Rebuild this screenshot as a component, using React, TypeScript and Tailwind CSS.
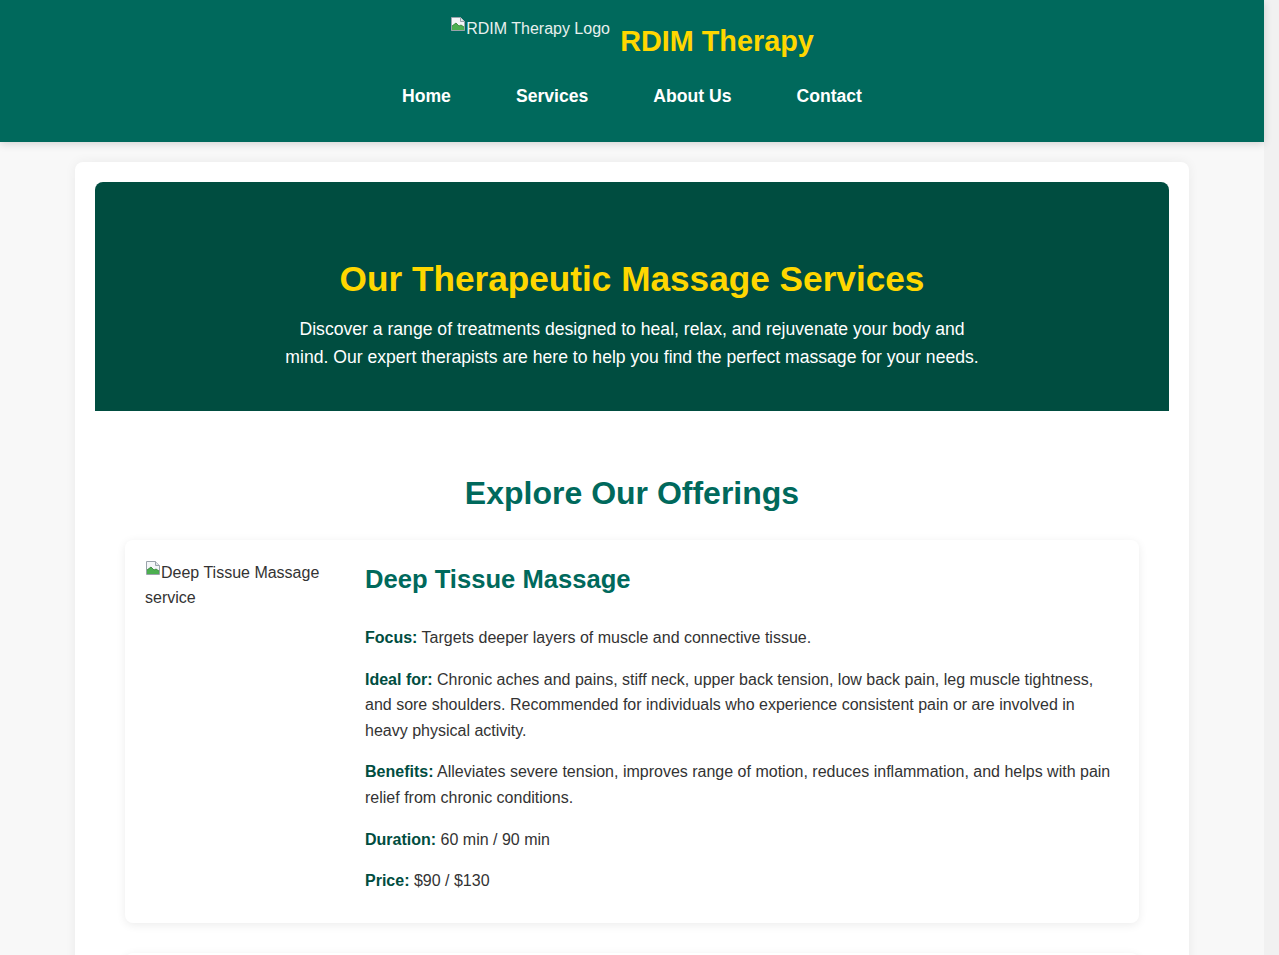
import React from 'react';

const services = [
  {
    title: 'Deep Tissue Massage',
    focus: 'Targets deeper layers of muscle and connective tissue.',
    ideal:
      'Chronic aches and pains, stiff neck, upper back tension, low back pain, leg muscle tightness, and sore shoulders. Recommended for individuals who experience consistent pain or are involved in heavy physical activity.',
    benefits:
      'Alleviates severe tension, improves range of motion, reduces inflammation, and helps with pain relief from chronic conditions.',
    duration: '60 min / 90 min',
    price: '$90 / $130',
  },
  {
    title: 'Swedish Massage',
    focus: 'Gentle, flowing strokes to promote overall relaxation.',
    ideal:
      'First-time clients, stress relief, light muscle tension, and anyone looking to unwind and restore a sense of calm.',
    benefits:
      'Improves circulation, eases muscle stiffness, lowers stress levels, and supports better sleep.',
    duration: '60 min / 90 min',
    price: '$80 / $115',
  },
  {
    title: 'Hot Stone Massage',
    focus: 'Smooth, heated stones placed on key points of the body.',
    ideal:
      'Deep relaxation, muscle tension, poor circulation, and those who enjoy the soothing effect of warmth.',
    benefits:
      'Warms and loosens tight muscles, allows deeper work with less pressure, and melts away stress.',
    duration: '75 min / 90 min',
    price: '$100 / $125',
  },
  {
    title: 'Sports Massage',
    focus: 'Muscle groups used in specific athletic activities.',
    ideal:
      'Athletes, active individuals, pre- and post-event preparation, and recovery from training or minor injuries.',
    benefits:
      'Enhances flexibility, speeds recovery, prevents injury, and improves overall athletic performance.',
    duration: '60 min / 90 min',
    price: '$95 / $135',
  },
];

// broken-image glyph, the way the browser draws a missing picture
function BrokenIcon() {
  return (
    <svg width="16" height="16" viewBox="0 0 16 16" className="inline-block align-top shrink-0">
      <path d="M1.5 1.5h9l4 4v9h-13z" fill="#f4f6f8" stroke="#9aa3ab" />
      <path d="M10.5 1.5v4h4" fill="#dfe4e8" stroke="#9aa3ab" />
      <path d="M2 14V10l4-3 3 3 2-1 3 2v3z" fill="#4caf50" />
      <path d="M2 10l4-3 3 3 2-1 3 2" fill="none" stroke="#2e7d32" strokeWidth="0.8" />
    </svg>
  );
}

function Label({ children }: { children: React.ReactNode }) {
  return <strong className="text-[#004d40] font-bold">{children}</strong>;
}

export default function App() {
  return (
    <div
      className="h-screen overflow-y-auto bg-[#f1f1f1] pr-[15px] text-[#333] text-base"
      style={{ fontFamily: '"Liberation Sans", Arial, sans-serif' }}
    >
      <div className="min-h-full bg-[#f8f8f8]">
        {/* header */}
        <header className="bg-[#00695c] shadow-[0_2px_8px_rgba(0,0,0,0.15)] pt-4 pb-[28px]">
          <div className="flex justify-center items-center gap-[10px] h-[50px]">
            <div className="h-[50px] w-[160px] text-[#e8f0ee] leading-[18px] pt-[4px]">
              <span className="inline-block -mt-[4px] align-top">
                <BrokenIcon />
              </span>
              RDIM Therapy Logo
            </div>
            <h1 className="text-[28.8px] font-bold text-[#ffd700] leading-none">RDIM Therapy</h1>
          </div>
          <nav className="mt-3 flex justify-center gap-[65px]">
            {['Home', 'Services', 'About Us', 'Contact'].map((item) => (
              <a key={item} href="#" className="py-2 text-[17.6px] leading-5 font-bold text-white">
                {item}
              </a>
            ))}
          </nav>
        </header>

        {/* main */}
        <main className="w-[1114px] mx-auto mt-5 mb-10 bg-white rounded-lg shadow-[0_0_12px_rgba(0,0,0,0.06)] p-5">
          <section className="bg-[#004d40] rounded-t-lg text-center pt-[77px] pb-10 px-5">
            <h2 className="text-[35.2px] leading-10 font-bold text-[#ffd700] mb-4">
              Our Therapeutic Massage Services
            </h2>
            <p className="max-w-[700px] mx-auto text-[17.6px] leading-[28px] text-white">
              Discover a range of treatments designed to heal, relax, and rejuvenate your body and
              mind. Our expert therapists are here to help you find the perfect massage for your needs.
            </p>
          </section>

          <section className="px-[30px] pt-[64px] pb-5">
            <h2 className="text-[32px] leading-[37px] font-bold text-[#00695c] text-center mb-[28px]">
              Explore Our Offerings
            </h2>

            <div className="flex flex-col gap-[30px]">
              {services.map((s) => (
                <div
                  key={s.title}
                  className="flex gap-5 bg-white rounded-lg shadow-[0_2px_10px_rgba(0,0,0,0.08)] pt-5 px-5 pb-[13px]"
                >
                  <div className="w-[200px] shrink-0 leading-[25px]">
                    <BrokenIcon />
                    {s.title} service
                  </div>
                  <div className="flex-1 text-base leading-[25.6px]">
                    <h3 className="text-[25.6px] leading-[30px] font-bold text-[#00695c] mt-1 mb-[31px]">
                      {s.title}
                    </h3>
                    <p className="mb-4">
                      <Label>Focus:</Label> {s.focus}
                    </p>
                    <p className="mb-4">
                      <Label>Ideal for:</Label> {s.ideal}
                    </p>
                    <p className="mb-4">
                      <Label>Benefits:</Label> {s.benefits}
                    </p>
                    <p className="mb-4">
                      <Label>Duration:</Label> {s.duration}
                    </p>
                    <p className="mb-4">
                      <Label>Price:</Label> {s.price}
                    </p>
                  </div>
                </div>
              ))}
            </div>
          </section>
        </main>

        <footer className="bg-[#00695c] text-white text-center py-6 text-sm">
          © 2024 RDIM Therapy. All rights reserved.
        </footer>
      </div>
    </div>
  );
}
